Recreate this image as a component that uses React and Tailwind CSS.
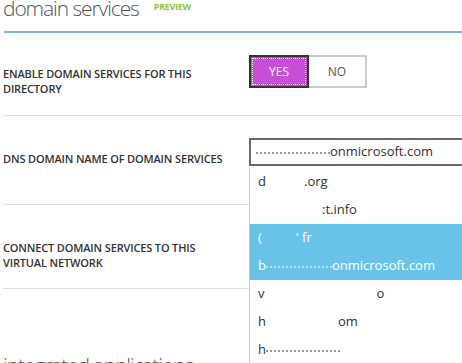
import React from "react";

const label = "text-[11px] leading-[15px] font-semibold text-[#333] uppercase tracking-[-0.15px]";

function Gap({ w }) {
  return <span className={`inline-block ${w}`} />;
}

function Smear({ w }) {
  return (
    <span className={`inline-block ${w} h-[3px] align-baseline border-b-2 border-dotted border-current opacity-50`} />
  );
}

export default function App() {
  return (
    <div
      className="relative w-[462px] h-[363px] overflow-hidden bg-white"
      style={{ fontFamily: '"Open Sans", "Noto Sans", sans-serif' }}
    >
      {/* header */}
      <div className="flex items-start h-[31px] pl-[3px]">
        <div className="text-[21px] leading-[20px] -mt-[2px] font-light text-[#555] tracking-[-1.1px]">
          domain services
        </div>
        <div className="ml-[15px] mt-[2px] text-[9px] leading-[10px] font-bold text-[#8cc63f] tracking-[-0.3px]">
          PREVIEW
        </div>
      </div>
      <div className="ml-[4px] h-[2px] bg-[#80b3de]" />

      {/* row 1 */}
      <div className="ml-[3px] flex h-[83px] border-b border-[#ddd]">
        <div className="w-[246px]">
          <div className={`w-[200px] pt-[33px] ${label}`}>
            Enable domain services for this directory
          </div>
        </div>
        <div className="pt-[22px] flex h-fit">
          <div className="w-[60px] h-[33px] border-2 border-[#333] bg-[#c64fd6] flex items-center justify-center outline-1 outline-dotted outline-white -outline-offset-[4px] text-[12px] text-white">
            YES
          </div>
          <div className="w-[58px] h-[33px] border-2 border-l-0 border-[#ccc] flex items-center justify-center text-[12px] text-[#555]">
            NO
          </div>
        </div>
      </div>

      {/* row 2 */}
      <div className="ml-[3px] flex h-[89px] border-b border-[#ddd]">
        <div className={`w-[246px] pt-[35px] ${label}`}>
          DNS domain name of domain services
        </div>
        <div className="pt-[22px] flex-1">
          <div className="h-[28px] border-2 border-r-0 border-[#6b6b6b] pl-[5px] flex items-center text-[13px] text-[#333] whitespace-pre">
            <Smear w="w-[74px]" />
            <span>onmicrosoft.com</span>
          </div>
        </div>
      </div>

      {/* row 3 */}
      <div className="ml-[3px] flex h-[84px] border-b border-[#ddd]">
        <div className={`w-[200px] pt-[35px] ${label}`}>
          Connect domain services to this virtual network
        </div>
      </div>

      <div className="pl-[3px] mt-[66px] text-[21px] leading-[20px] font-light text-[#555] tracking-[-1.1px]">
        integrated applications
      </div>

      {/* dropdown list overlay */}
      <div className="absolute left-[249px] top-[168px] right-0 bottom-0 bg-white border-l border-[#ccc] text-[13px] text-[#333] whitespace-pre">
        <div className="h-[28px] pl-[8px] flex items-center">
          <span>d</span><Gap w="w-[38px]" /><span>.org</span>
        </div>
        <div className="h-[28px] pl-[8px] flex items-center">
          <Gap w="w-[64px]" /><span>:t.info</span>
        </div>
        <div className="h-[28px] pl-[8px] flex items-center bg-[#69c3e9] text-white">
          <span>(</span><Gap w="w-[34px]" /><span>' fr</span>
        </div>
        <div className="h-[28px] pl-[8px] flex items-center bg-[#69c3e9] text-white">
          <span>b</span><Smear w="w-[66px]" /><span>onmicrosoft.com</span>
        </div>
        <div className="h-[28px] pl-[8px] flex items-center">
          <span>v</span><Gap w="w-[112px]" /><span>o</span>
        </div>
        <div className="h-[28px] pl-[8px] flex items-center">
          <span>h</span><Gap w="w-[72px]" /><span>om</span>
        </div>
        <div className="h-[28px] pl-[8px] flex items-center">
          <span>h</span><Smear w="w-[74px]" />
        </div>
      </div>
    </div>
  );
}
